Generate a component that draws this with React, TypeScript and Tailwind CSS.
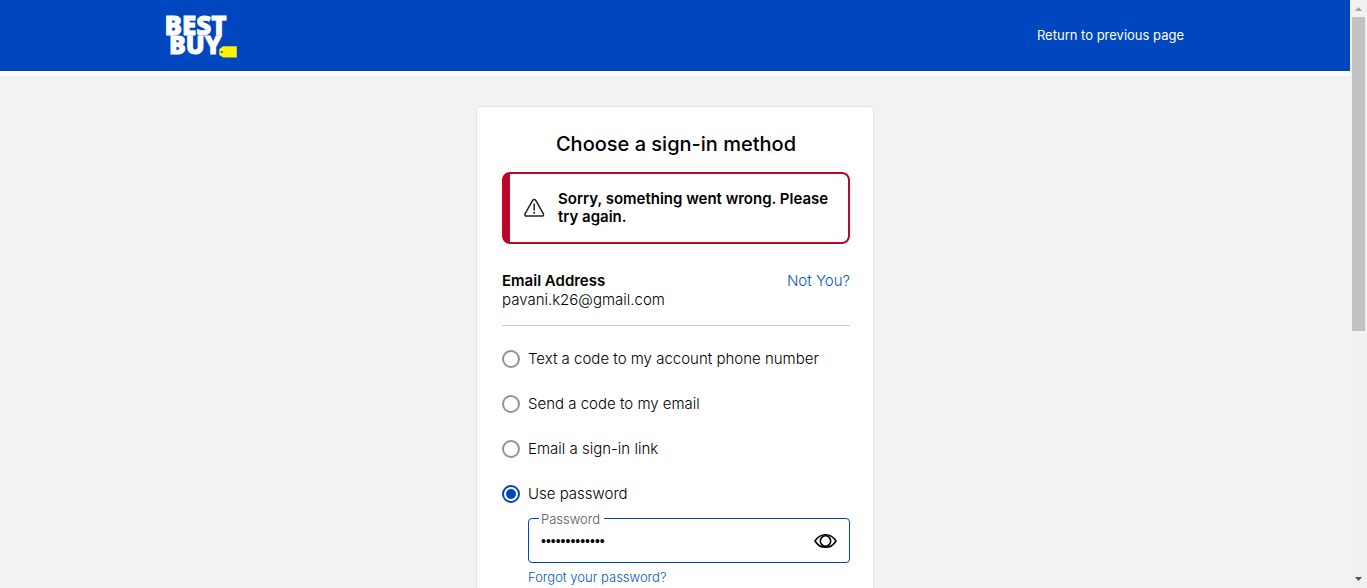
import { useState } from "react";

const METHODS = [
  { id: "text", label: "Text a code to my account phone number" },
  { id: "email-code", label: "Send a code to my email" },
  { id: "email-link", label: "Email a sign-in link" },
  { id: "password", label: "Use password" },
];

function Logo() {
  return (
    <a href="#home" aria-label="Best Buy" className="block">
      <svg width="72" height="53" viewBox="0 0 72 53" className="block overflow-visible">
        <g fill="#fff" stroke="#fff" strokeWidth="0.8" fontFamily="'Open Sans', sans-serif" fontWeight="800">
          <text x="-1.500" y="27" fontSize="26">BEST</text>
          <text x="3" y="46" fontSize="25">BUY</text>
        </g>
        <path d="M57.2 38.2h13.6v11.4H57.2L53.3 47v-6z" fill="#fff200" />
        <circle cx="55.8" cy="44" r="1" fill="#0046be" />
      </svg>
    </a>
  );
}

function Header() {
  return (
    <header className="border-b-[5px] border-white bg-[#0046be]">
      <div className="mx-auto flex h-[71px] max-w-[1018px] items-center justify-between pb-0.5">
        <Logo />
        <a href="#previous" className="text-[13px] leading-5 text-white">
          Return to previous page
        </a>
      </div>
    </header>
  );
}

function ErrorAlert() {
  return (
    <div
      role="alert"
      className="flex items-center rounded-lg border-2 border-l-8 border-[#bb0628] py-4 pr-4 pl-3.5"
    >
      <svg width="21" height="20" viewBox="0 0 21 20" fill="none" stroke="#1d252c" strokeWidth="1.5" strokeLinecap="round" strokeLinejoin="round" className="shrink-0">
        <path d="M8.800 2.200 1.100 15.600c-.7 1.200.1 2.500 1.400 2.500h15.400c1.300 0 2.100-1.300 1.400-2.500L11.600 2.200c-.6-1.100-2.200-1.100-2.800 0z" />
        <path d="M10.200 6.300v5.700" />
        <path d="M10.200 14.700v.2" strokeWidth="1.800" />
      </svg>
      <p className="ml-[13px] text-[15px] leading-[18px] font-semibold">
        Sorry, something went wrong. Please try again.
      </p>
    </div>
  );
}

function PasswordField() {
  const [value, setValue] = useState("abcdefghijklm");
  const [visible, setVisible] = useState(false);
  return (
    <div className="pl-[26px]">
      <div className="relative flex h-[45px] items-center rounded border border-[#0046be] px-3">
        <label htmlFor="password" className="absolute -top-2 left-2.5 bg-white pr-1 pl-0.5 text-[13px] leading-4 font-light text-[#55555a]">
          Password
        </label>
        <input
          id="password"
          type={visible ? "text" : "password"}
          value={value}
          onChange={(e) => setValue(e.target.value)}
          className="min-w-0 flex-1 bg-transparent font-['Liberation_Sans',sans-serif] text-sm text-black outline-none"
        />
        <button type="button" aria-label="Show password" onClick={() => setVisible(!visible)}>
          <svg width="23" height="16" viewBox="0 0 23 16" fill="none" stroke="#000" strokeWidth="1.600" className="block">
            <path d="M1 8C3.500 3.800 7 1.700 11.500 1.700S19.500 3.800 22 8c-2.500 4.200-6 6.300-10.500 6.300S3.500 12.200 1 8z" strokeLinejoin="round" />
            <circle cx="11.500" cy="8" r="5.200" />
          </svg>
        </button>
      </div>
      <a href="#forgot" className="mt-1 block text-[13px] leading-5 font-light text-[#0457c8]">
        Forgot your password?
      </a>
    </div>
  );
}

function SignInCard() {
  const [method, setMethod] = useState("password");
  return (
    <main className="mx-auto mt-[30px] w-full max-w-[398px] rounded border border-[#dfe3ea] bg-white pt-6 pr-[23px] pb-10 pl-[25px]">
      <h1 className="mb-[15px] text-center text-xl leading-[26px] font-medium">Choose a sign-in method</h1>
      <ErrorAlert />
      <div className="mt-[27px] flex items-start justify-between border-b border-[#c5cbd5] pb-4 text-[15px] leading-[19px]">
        <div>
          <p className="font-semibold">Email Address</p>
          <p className="font-light">pavani.k26@gmail.com</p>
        </div>
        <a href="#switch" className="font-light text-[#0457c8]">
          Not You?
        </a>
      </div>
      <form className="mt-[23px]">
        <fieldset aria-label="Sign-in method" className="grid gap-[25px]">
          {METHODS.map((m) => (
            <label key={m.id} className="flex items-center gap-2 text-[15px] leading-5 font-light">
              <input
                type="radio"
                name="method"
                value={m.id}
                checked={method === m.id}
                onChange={() => setMethod(m.id)}
                className="size-[18px] shrink-0 appearance-none rounded-full border-2 border-[#9094a0] checked:border-[#0046be] checked:bg-[#0046be] checked:bg-clip-content checked:p-0.5"
              />
              {m.label}
            </label>
          ))}
        </fieldset>
        <div className="mt-3.5">
          <PasswordField />
        </div>
      </form>
    </main>
  );
}

function Scrollbar() {
  return (
    <div aria-hidden="true" className="flex w-[17px] shrink-0 flex-col items-center bg-[#f1f1f1]">
      <svg width="17" height="17" viewBox="0 0 17 17" className="block shrink-0">
        <path d="M5 11h7L8.500 7z" fill="#a3a3a3" />
      </svg>
      <div className="flex min-h-0 w-[13px] flex-1">
        <div className="h-[314px] w-full bg-[#c1c1c1]" />
      </div>
      <svg width="17" height="17" viewBox="0 0 17 17" className="block shrink-0">
        <path d="M5 6h7l-3.500 4z" fill="#505050" />
      </svg>
    </div>
  );
}

export default function App() {
  return (
    <div className="flex h-screen overflow-hidden bg-[#f0f2f4] font-['Inter',sans-serif] text-black">
      <div className="min-w-0 flex-1 overflow-hidden">
        <Header />
        <SignInCard />
      </div>
      <Scrollbar />
    </div>
  );
}
